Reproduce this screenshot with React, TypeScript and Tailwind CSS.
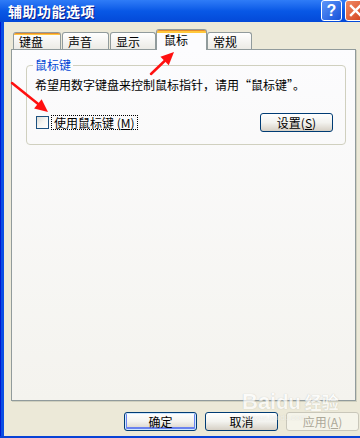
import { ReactNode } from "react";

const cjk = "font-['SimSun','Noto_Sans_CJK_SC',sans-serif]";

const Tab = ({ label, width, selected = false, hot = false, className = "" }: { label: string; width: number; selected?: boolean; hot?: boolean; className?: string }) => {
  if (selected) {
    return (
      <div
        className={`relative z-10 -mb-px h-[21px] rounded-t-[3px] border border-b-0 border-[#919b9c] bg-[#fcfcfe] ${className}`}
        style={{ width }}
      >
        <div className="h-[3px] rounded-t-[2px] bg-[#ffc83c] border-t border-[#e68b2c]" />
        <div className="pl-[7px] text-[12px] leading-[14px] text-black">{label}</div>
      </div>
    );
  }
  return (
    <div
      className={`h-[17px] rounded-t-[3px] border border-b-0 border-[#919b9c] bg-gradient-to-b from-white to-[#ecebe6] ${className}`}
      style={{ width }}
    >
      {hot ? <div className="h-[2px] rounded-t-[2px] bg-[#ffc83c] border-t border-[#e68b2c]" /> : <div className="h-[2px]" />}
      <div className="pl-[5px] text-[12px] leading-[14px] text-black">{label}</div>
    </div>
  );
};

const XpButton = ({ children, focused = false, disabled = false }: { children: ReactNode; focused?: boolean; disabled?: boolean }) => (
  <div
    className={`flex h-[19px] w-[73px] items-center justify-center rounded-[3px] border text-[12px] leading-[14px] ${
      disabled
        ? "border-[#c9c7ba] bg-[#f5f4ea] text-[#aca899]"
        : "border-[#003c74] bg-gradient-to-b from-white via-[#f3f3ef] to-[#d6d0c5] text-black"
    } ${focused ? "shadow-[inset_0_0_0_1px_#cee7ff,inset_0_-1px_0_2px_#6982ee]" : ""}`}
  >
    {children}
  </div>
);

const Arrow = ({ x1, y1, x2, y2 }: { x1: number; y1: number; x2: number; y2: number }) => {
  const ang = Math.atan2(y2 - y1, x2 - x1);
  const len = 13;
  const w = 6;
  const bx = x2 - Math.cos(ang) * len;
  const by = y2 - Math.sin(ang) * len;
  const px = -Math.sin(ang) * w;
  const py = Math.cos(ang) * w;
  return (
    <g>
      <line x1={x1} y1={y1} x2={bx} y2={by} stroke="#ff1010" strokeWidth="2.5" strokeLinecap="round" />
      <polygon points={`${x2},${y2} ${bx + px},${by + py} ${bx - px},${by - py}`} fill="#ff1010" />
    </g>
  );
};

export default function App() {
  return (
    <div className={`relative h-[438px] w-[360px] overflow-hidden bg-[#0842d6] ${cjk}`}>
      {/* Title bar */}
      <div className="flex h-[22px] items-start bg-gradient-to-b from-[#2f7cf7] via-[#0858e6] to-[#0449d8]">
        <div className="flex h-[22px] flex-1 items-center pl-[8px] text-[14px] font-bold tracking-[0.5px] text-white [text-shadow:1px_1px_0_#0a1e8c]">
          辅助功能选项
        </div>
        <div className="flex h-[21px] w-[21px] shrink-0 items-center justify-center rounded-[3px] border border-white bg-gradient-to-br from-[#5d95fa] to-[#1650d8] font-['Liberation_Sans',sans-serif] text-[16px] font-bold leading-none text-white">
          ?
        </div>
        <div className="-mr-[6px] ml-[3px] flex h-[21px] w-[21px] shrink-0 items-center justify-center rounded-[3px] border border-white bg-gradient-to-br from-[#f08a64] to-[#d13c13]">
          <svg width="13" height="13" viewBox="0 0 13 13">
            <path d="M2 2 L11 11 M11 2 L2 11" stroke="white" strokeWidth="2.4" strokeLinecap="square" />
          </svg>
        </div>
      </div>

      {/* Window frame + body */}
      <div className="flex h-[414px]">
        <div className="w-[4px] border-l border-[#0019cf] bg-[#0a4ee4]" />
        <div className="flex flex-1 flex-col bg-[#ece9d8] pl-[7px] pt-[7px]">
          {/* Tabs */}
          <div className="flex h-[20px] items-end">
            <Tab label="键盘" width={48} hot className="ml-[2px]" />
            <Tab label="声音" width={47} className="ml-[1px]" />
            <Tab label="显示" width={46} className="ml-[1px]" />
            <Tab label="鼠标" width={51} selected />
            <Tab label="常规" width={45} />
          </div>

          {/* Panel */}
          <div className="h-[352px] w-[345px] border border-[#919b9c] bg-gradient-to-b from-[#fcfcfe] to-[#f4f3ee] pt-[8px] shadow-[1px_1px_0_#d0d0bf]">
            <fieldset className="ml-[14px] w-[320px] rounded-[4px] border border-[#d0d0bf] pb-[12px] pl-[8px] pr-[12px]">
              <legend className="-ml-[2px] px-[2px] text-[12px] leading-[14px] text-[#0046d5]">鼠标键</legend>
              <div className="mt-[6px] text-[12px] leading-[14px] text-black">希望用数字键盘来控制鼠标指针，请用“鼠标键”。</div>
              <div className="mt-[21px] flex items-center justify-between">
                <div className="flex items-center">
                  <div className="ml-[1px] h-[13px] w-[13px] border border-[#1c5180] bg-gradient-to-br from-[#dcdcd7] via-[#f6f6f3] to-white" />
                  <div className="ml-[2px] border border-dotted border-black px-[2px] text-[12px] leading-[13px] text-black">
                    使用鼠标键 (<span className="underline">M</span>)
                  </div>
                </div>
                <XpButton>
                  设置(<span className="underline">S</span>)
                </XpButton>
              </div>
            </fieldset>
          </div>

          {/* Bottom buttons */}
          <div className="mt-[11px] flex gap-[8px] pl-[113px]">
            <XpButton focused>确定</XpButton>
            <XpButton>取消</XpButton>
            <XpButton disabled>
              应用(<span className="underline">A</span>)
            </XpButton>
          </div>
        </div>
      </div>

      {/* Watermark */}
      <div className="pointer-events-none absolute left-[242px] top-[391px] select-none text-white opacity-70">
        <div className="flex items-end font-['Liberation_Sans',sans-serif] text-[22px] font-bold leading-[22px] [text-shadow:0_0_1px_#a8a8a0]">
          Bai<span className="text-[20px]">du</span>
          <span className={`ml-[4px] text-[17px] ${cjk}`}>经验</span>
        </div>
        <div className="font-['Liberation_Sans',sans-serif] text-[8px] leading-[9px] opacity-60 [text-shadow:0_0_1px_#a8a8a0]">jingyan.baidu.com</div>
      </div>

      {/* Red annotation arrows */}
      <svg className="pointer-events-none absolute left-0 top-0" width="360" height="438">
        <Arrow x1={12} y1={83} x2={48} y2={112} />
        <Arrow x1={151} y1={74} x2={174} y2={52} />
      </svg>
    </div>
  );
}
